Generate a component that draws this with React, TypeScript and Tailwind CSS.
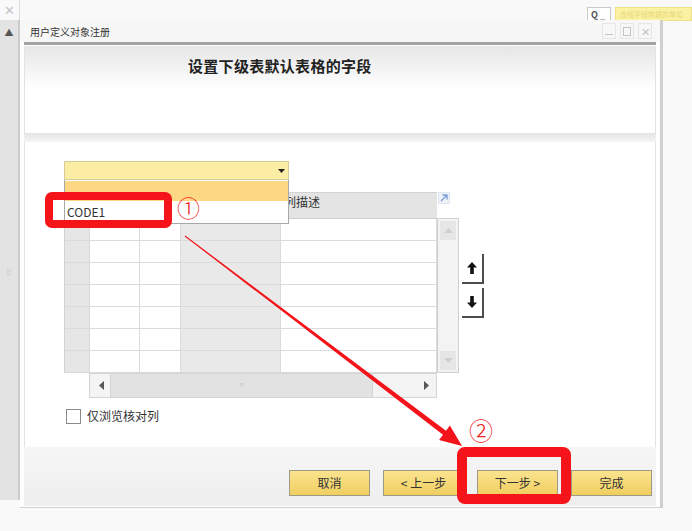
import React from 'react';

const cols = [
  { w: 'w-[25px]', bg: 'bg-[#e6e6e6]' },
  { w: 'w-[50px]', bg: 'bg-white' },
  { w: 'w-[41px]', bg: 'bg-white' },
  { w: 'w-[101px]', bg: 'bg-[#e9e9e9]' },
  { w: 'w-[156px]', bg: 'bg-white' },
];

const rows = [0, 1, 2, 3, 4, 5, 6];

const ArrowBtn: React.FC<{ down?: boolean }> = ({ down }) => (
  <div className="w-[22px] h-[30px] bg-white border-r-2 border-b-2 border-[#4d4d4d] flex items-center justify-center">
    <svg width="10" height="12" viewBox="0 0 10 12" className={down ? 'rotate-180' : ''}>
      <path d="M5 0 L10 5.5 H6.8 V12 H3.2 V5.5 H0 Z" fill="#111" />
    </svg>
  </div>
);

const FooterButton: React.FC<{ label: string }> = ({ label }) => (
  <button
    type="button"
    className="w-[81px] h-[26px] border border-[#9c9a86] bg-gradient-to-b from-[#fae38f] to-[#f1cf5e] text-[12px] text-[#333] flex items-center justify-center"
  >
    {label}
  </button>
);

export default function App() {
  return (
    <div className="relative w-[692px] h-[531px] overflow-hidden bg-[#f9f9f9] font-['Noto_Sans_CJK_SC','Noto_Sans',sans-serif] text-[#333]">
      {/* top strip */}
      <div className="h-[20px] flex">
        <div className="w-[20px] border-r border-[#dcdcdc] flex items-center justify-center text-[13px] text-[#c4c4c4]">✕</div>
        <div className="flex-1" />
        <div className="flex items-start pt-[7px] gap-[4px]">
          <div className="w-[24px] h-[14px] bg-white border border-[#c9c9c9] flex items-center justify-start pl-[3px] text-[9px] font-bold text-[#555] leading-none">
            Q<span className="ml-[2px] text-[#aaa]">_</span>
          </div>
          <div className="w-[77px] h-[14px] bg-[#fbf1a2] border border-[#efe08a] text-[7px] leading-[12px] pl-[4px] text-[#e8d77c] whitespace-nowrap overflow-hidden">
            查找字段数据的单位
          </div>
        </div>
      </div>

      <div className="flex">
        {/* left sidebar */}
        <div className="w-[20px] h-[480px] bg-[#e3e3e3] border-r-2 border-[#cbcbcb] flex flex-col items-center">
          <div className="h-[26px] w-full flex items-center justify-center text-[9px] text-[#555]">▲</div>
          <div className="flex-1 flex items-center justify-center text-[8px] text-[#c0c0c0] leading-none">⁞⁞</div>
        </div>

        {/* dialog */}
        <div className="w-[643px] h-[488px] bg-white border-r-[3px] border-b border-[#cfcfcf] flex flex-col">
          {/* title bar */}
          <div className="h-[22px] flex items-center bg-[#f7f7f7] pl-[10px] pr-[8px]">
            <span className="text-[10px] text-[#333]">用户定义对象注册</span>
            <div className="flex-1" />
            <div className="flex items-center gap-[4px] text-[#c9c9c9]">
              <div className="w-[14px] h-[16px] border border-[#e6e6e6] flex items-end justify-center pb-[3px]">
                <div className="w-[8px] h-[1px] bg-[#c4c4c4]" />
              </div>
              <div className="w-[14px] h-[16px] border border-[#e6e6e6] flex items-center justify-center">
                <div className="w-[8px] h-[9px] border border-[#c4c4c4]" />
              </div>
              <div className="w-[14px] h-[16px] border border-[#e6e6e6] flex items-center justify-center text-[11px] leading-none text-[#c4c4c4]">✕</div>
            </div>
          </div>
          <div className="mx-[4px] h-[3px] bg-[#a3a3a3]" />

          <div className="flex-1 flex flex-col px-[4px] pt-[1px]">
            {/* header panel */}
            <div className="h-[87px] bg-gradient-to-b from-[#e6e6e6] via-white to-white border-x border-[#e2e2e2] pt-[9px] pl-[163px]">
              <div className="text-[15px] font-bold text-[#222] tracking-[0.3px]">设置下级表默认表格的字段</div>
            </div>
            <div className="h-[9px] bg-gradient-to-b from-[#e4e4e4] to-[#f6f6f6]" />

            {/* content */}
            <div className="relative h-[305px] bg-white border-x border-[#e2e2e2] pl-[39px] pt-[19px]">
              {/* combo */}
              <div className="w-[225px] h-[19px] bg-[#fbeda4] border border-[#d6cc9a] flex items-center justify-end pr-[3px]">
                <svg width="7" height="4" viewBox="0 0 7 4"><path d="M0 0 H7 L3.5 4 Z" fill="#222" /></svg>
              </div>

              {/* grid + buttons */}
              <div className="flex mt-[12px]">
                <div className="w-[373px]">
                  <div className="border-l border-t border-[#d2d2d2]">
                    <div className="h-[26px] bg-[#e4e4e4] border-b border-[#d0d0d0] flex">
                      <div className="w-[216px]" />
                      <div className="flex-1 pl-[3px] text-[12px] leading-[18px] text-[#333]">列描述</div>
                    </div>
                    {rows.map((r) => (
                      <div key={r} className="flex h-[22px]">
                        {cols.map((c, i) => (
                          <div key={i} className={`${c.w} ${c.bg} h-full border-r border-b border-[#dadada]`} />
                        ))}
                      </div>
                    ))}
                  </div>
                  {/* horizontal scroll */}
                  <div className="ml-[25px] w-[348px] h-[25px] bg-[#f4f4f4] border border-[#d4d4d4] flex items-center">
                    <div className="w-[20px] flex justify-center pl-[2px]">
                      <svg width="5" height="9" viewBox="0 0 5 9"><path d="M5 0 V9 L0 4.5 Z" fill="#555" /></svg>
                    </div>
                    <div className="w-[263px] h-[23px] bg-[#e2e2e2] border-x border-[#d6d6d6] flex items-center justify-center text-[7px] text-[#c6c6c6] leading-none">⠿</div>
                    <div className="flex-1 flex justify-end pr-[7px]">
                      <svg width="5" height="9" viewBox="0 0 5 9"><path d="M0 0 V9 L5 4.5 Z" fill="#555" /></svg>
                    </div>
                  </div>
                </div>

                <div className="w-[22px] flex flex-col">
                  <div className="h-[26px] pl-[1px]">
                    <svg width="12" height="12" viewBox="0 0 12 12">
                      <rect x="0.5" y="0.5" width="11" height="11" fill="#eef2f9" stroke="#dfe5f0" />
                      <path d="M3 9 L9 3 M4.5 3 H9 V7.5" stroke="#7e9dd3" strokeWidth="1.4" fill="none" />
                    </svg>
                  </div>
                  <div className="h-[155px] bg-[#f3f3f3] border border-[#d0d0d0] flex flex-col justify-between p-[2px]">
                    <div className="h-[19px] bg-[#e6e6e6] flex items-center justify-center">
                      <svg width="9" height="5" viewBox="0 0 9 5"><path d="M0 5 L4.5 0 L9 5 Z" fill="#cfcfcf" /></svg>
                    </div>
                    <div className="h-[19px] bg-[#e6e6e6] flex items-center justify-center">
                      <svg width="9" height="5" viewBox="0 0 9 5"><path d="M0 0 L4.5 5 L9 0 Z" fill="#cfcfcf" /></svg>
                    </div>
                  </div>
                </div>

                <div className="ml-[3px] mt-[62px] flex flex-col gap-[4px]">
                  <ArrowBtn />
                  <ArrowBtn down />
                </div>
              </div>

              {/* checkbox */}
              <div className="flex items-center mt-[9px] ml-[2px]">
                <div className="w-[15px] h-[15px] border border-[#8a8a8a] bg-white" />
                <span className="ml-[6px] text-[12px] text-[#333]">仅浏览核对列</span>
              </div>

              {/* open dropdown list */}
              <div className="absolute left-[39px] top-[38px] w-[225px] h-[44px] bg-white border border-[#a8a8a8] border-t-0 pt-[1px]">
                <div className="h-[20px] bg-[#fdd884]" />
                <div className="h-[21px] pl-[2px] text-[12px] leading-[21px] text-[#333]">CODE1</div>
              </div>
            </div>

            {/* footer */}
            <div className="h-[59px] bg-gradient-to-b from-[#f6f6f6] to-[#eeeeee] flex items-start justify-end pt-[23px] pr-[4px] gap-[13px]">
              <FooterButton label="取消" />
              <FooterButton label="< 上一步" />
              <FooterButton label="下一步 >" />
              <FooterButton label="完成" />
            </div>
          </div>
        </div>
        <div className="flex-1" />
      </div>

      {/* annotations */}
      <div className="absolute left-[45px] top-[192px] w-[127px] h-[36px] border-[8px] border-[#f5141a] rounded-[7px]" />
      <div className="absolute left-[177px] top-[196px] text-[23px] leading-none text-[#f02020] font-light">①</div>
      <div className="absolute left-[457px] top-[447px] w-[114px] h-[57px] border-[10px] border-[#f5141a] rounded-[8px]" />
      <div className="absolute left-[469px] top-[418px] text-[24px] leading-none text-[#f02020] font-light">②</div>
      <svg className="absolute left-0 top-0 pointer-events-none" width="692" height="531" viewBox="0 0 692 531">
        <polygon
          points="185.3,235.6 446,430.7 449.9,425.5 462,446 439.1,439.9 443,434.7 184.7,236.4"
          fill="#f2141a"
        />
      </svg>
    </div>
  );
}
